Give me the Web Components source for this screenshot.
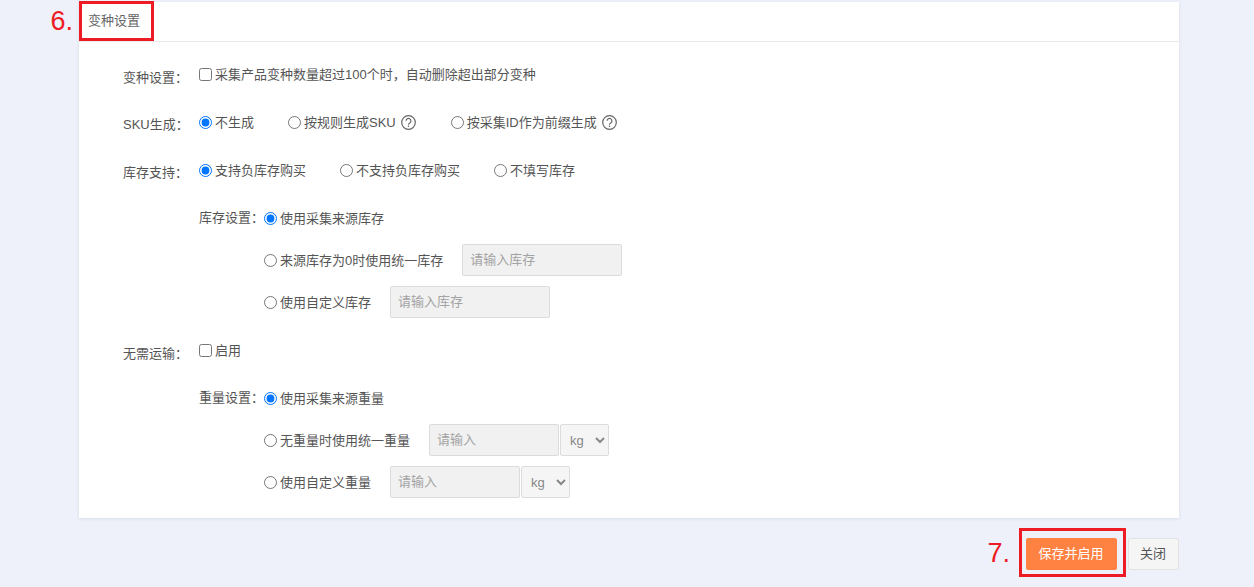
<!DOCTYPE html>
<html lang="zh-CN">
<head>
<meta charset="utf-8">
<title>变种设置</title>
<style>
  html, body { margin: 0; height: 100%; background: #eef1f9; overflow: hidden; }
  body { font-family: "Liberation Sans", "Noto Sans CJK SC", sans-serif; font-size: 13px; color: #555; }
</style>
</head>
<body>
<settings-page>
  <form-card>
    <callout-box slot="title" label="6." class="title">变种设置</callout-box>

    <form-row label="变种设置：" class="check">
      <check-option>采集产品变种数量超过100个时，自动删除超出部分变种</check-option>
    </form-row>

    <form-row label="SKU生成：">
      <radio-option name="sku" checked>不生成</radio-option>
      <radio-option name="sku">按规则生成SKU<help-icon></help-icon></radio-option>
      <radio-option name="sku">按采集ID作为前缀生成<help-icon></help-icon></radio-option>
    </form-row>

    <form-row label="库存支持：">
      <radio-option name="stock" checked>支持负库存购买</radio-option>
      <radio-option name="stock">不支持负库存购买</radio-option>
      <radio-option name="stock">不填写库存</radio-option>
    </form-row>

    <sub-group label="库存设置：">
      <sub-row><radio-option name="stockset" checked>使用采集来源库存</radio-option></sub-row>
      <sub-row>
        <radio-option name="stockset">来源库存为0时使用统一库存</radio-option>
        <text-field placeholder="请输入库存"></text-field>
      </sub-row>
      <sub-row>
        <radio-option name="stockset">使用自定义库存</radio-option>
        <text-field placeholder="请输入库存"></text-field>
      </sub-row>
    </sub-group>

    <form-row label="无需运输：" class="check">
      <check-option>启用</check-option>
    </form-row>

    <sub-group label="重量设置：">
      <sub-row><radio-option name="weight" checked>使用采集来源重量</radio-option></sub-row>
      <sub-row>
        <radio-option name="weight">无重量时使用统一重量</radio-option>
        <unit-field placeholder="请输入"></unit-field>
      </sub-row>
      <sub-row>
        <radio-option name="weight">使用自定义重量</radio-option>
        <unit-field placeholder="请输入"></unit-field>
      </sub-row>
    </sub-group>
  </form-card>

  <callout-box slot="footer" label="7." class="save"><app-button primary>保存并启用</app-button></callout-box>
  <app-button slot="footer" class="close">关闭</app-button>
</settings-page>

<script>
const define = (name, styles, html) => {
  customElements.define(name, class extends HTMLElement {
    constructor() {
      super();
      this.root = this.attachShadow({ mode: 'open' });
      this.root.innerHTML = `<style>${styles}</style>${html(this)}`;
    }
  });
};

define('settings-page', `
  :host { display: block; padding: 2px 75px 0 79px; }
  .footer { display: flex; justify-content: flex-end; gap: 2px; margin-top: 10px; align-items: flex-start; }
`, () => `
  <slot></slot>
  <div class="footer"><slot name="footer"></slot></div>
`);

define('form-card', `
  :host { display: block; background: #fff; box-shadow: 0 1px 3px rgba(60, 70, 110, .12); }
  header { height: 39px; border-bottom: 1px solid #eaeaea; display: flex; }
  main { display: flex; flex-direction: column; gap: 6px; padding: 11px 44px 15px; }
`, () => `
  <header><slot name="title"></slot></header>
  <main><slot></slot></main>
`);

define('callout-box', `
  :host { display: block; position: relative; box-sizing: border-box; }
  :host(.title) { height: 40px; margin-top: -1px; padding: 0 14px 0 9px; line-height: 39px; color: #666; --gap: 6px; }
  :host(.save) { padding: 10px 9px 7px 7px; --gap: 9px; }
  .frame { position: absolute; inset: 0; border: 3px solid #ed1c24; pointer-events: none; }
  .num {
    position: absolute; right: 100%; top: 50%; transform: translateY(-50%);
    margin-right: var(--gap); color: #ed1c24;
    font: 27px/1 "Liberation Sans", sans-serif; white-space: nowrap;
  }
`, (el) => `
  <slot></slot>
  <span class="frame"></span>
  <span class="num">${el.getAttribute('label')}</span>
`);

define('form-row', `
  :host { display: flex; height: 42px; align-items: center; }
  .label { flex: none; width: 76px; padding-top: 2px; white-space: nowrap; }
  :host(.check) .label { padding-top: 4px; }
  .controls { display: flex; align-items: center; gap: 34px; }
`, (el) => `
  <span class="label">${el.getAttribute('label')}</span>
  <div class="controls"><slot></slot></div>
`);

define('sub-group', `
  :host { display: flex; padding-left: 76px; }
  .label { flex: none; width: 65px; height: 42px; line-height: 42px; white-space: nowrap; }
  .rows { display: flex; flex-direction: column; }
`, (el) => `
  <span class="label">${el.getAttribute('label')}</span>
  <div class="rows"><slot></slot></div>
`);

define('sub-row', `
  :host { display: flex; height: 42px; align-items: center; gap: 19px; }
`, () => `<slot></slot>`);

const optionStyles = `
  :host { display: inline-flex; align-items: center; white-space: nowrap; }
  label { display: inline-flex; align-items: center; gap: 3px; }
  input { margin: 0; width: 13px; height: 13px; }
  span { position: relative; top: -1px; }
`;

define('radio-option', optionStyles, (el) => `
  <label>
    <input type="radio" name="${el.getAttribute('name')}" ${el.hasAttribute('checked') ? 'checked' : ''}>
    <span><slot></slot></span>
  </label>
`);

define('check-option', optionStyles, () => `
  <label><input type="checkbox"><span><slot></slot></span></label>
`);

define('help-icon', `
  :host { display: inline-block; width: 15px; height: 15px; margin: 0 1px 0 5px; vertical-align: -3px; }
  svg { display: block; }
`, () => `
  <svg width="15" height="15" viewBox="0 0 15 15" fill="none" stroke="#666" stroke-width="1.2">
    <circle cx="7.5" cy="7.5" r="6.8"/>
    <path d="M5.1 5.8a2.4 2.4 0 1 1 3.8 2c-.9.6-1.4 1-1.4 1.9"/>
    <path d="M7.5 10.6v1.3" stroke-width="1.3"/>
  </svg>
`);

const fieldStyles = `
  input {
    box-sizing: border-box; height: 32px; margin: 0; padding: 0 8px 1px 7px;
    border: 1px solid #dcdcdc; border-radius: 2px; background: #f1f1f1;
    font: inherit; color: #555; outline: none;
  }
  input::placeholder { color: #a3a3a3; opacity: 1; }
`;

define('text-field', fieldStyles + `
  :host { display: block; }
  input { display: block; width: 160px; }
`, (el) => `<input type="text" disabled placeholder="${el.getAttribute('placeholder')}">`);

define('unit-field', fieldStyles + `
  :host { display: flex; gap: 1px; }
  input { width: 130px; }
  select {
    box-sizing: border-box; width: 49px; height: 32px; margin: 0; padding: 0 0 0 5px;
    border: 1px solid #dcdcdc; border-radius: 2px; background: #f5f5f5;
    font: inherit; color: #888; outline: none;
  }
`, (el) => `
  <input type="text" disabled placeholder="${el.getAttribute('placeholder')}">
  <select><option>kg</option></select>
`);

define('app-button', `
  :host { display: block; }
  :host(.close) { margin-top: 10px; }
  button {
    display: block; box-sizing: border-box; height: 32px; width: 51px; padding: 0 1px 3px 0;
    border: 1px solid #e2e2e2; border-radius: 2px; background: #f5f5f5;
    font: inherit; color: #555; cursor: pointer;
  }
  :host([primary]) button { width: 91px; border-color: #ff8243; background: #ff8243; color: #fff; }
`, () => `<button type="button"><slot></slot></button>`);
</script>
</body>
</html>
